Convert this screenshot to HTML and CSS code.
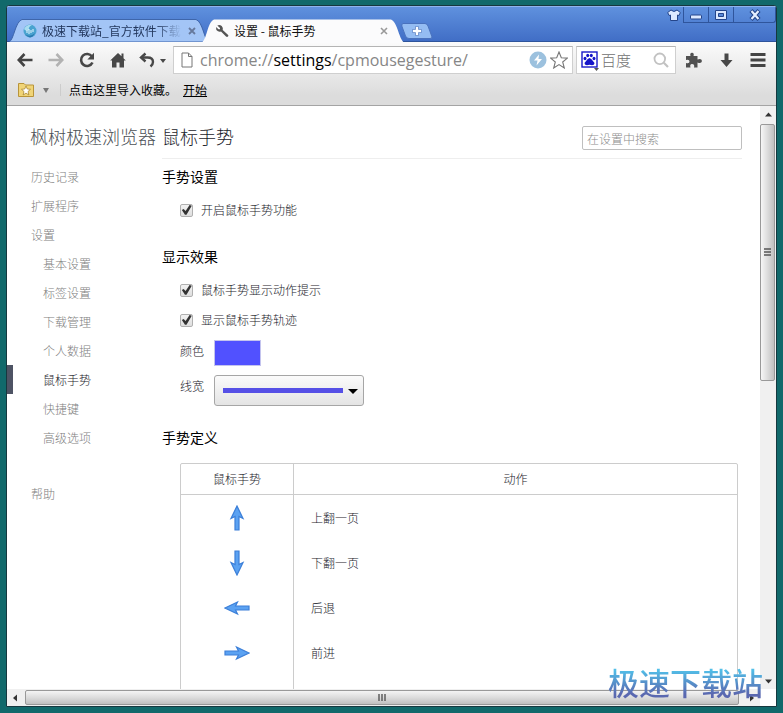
FILE: index.html
```html
<!DOCTYPE html>
<html lang="zh-CN">
<head>
<meta charset="utf-8">
<title>设置 - 鼠标手势</title>
<link rel="stylesheet" href="styles.css">
</head>
<body>
<div class="window">
  <header class="titlebar">
    <div class="tabs">
      <div class="tab tab-back">
        <svg class="tab-shape" viewBox="0 0 200 24" preserveAspectRatio="none" aria-hidden="true"><path d="M0 24C5 22 6 3 13 .5H187C194 3 195 22 200 24Z" fill="#a3c5f6" stroke="#3b62a8"/></svg>
        <svg class="favicon" viewBox="0 0 14 14" aria-hidden="true"><circle cx="7" cy="7" r="6.5" fill="#4aa3d0"/><path d="M1 5Q4 0 9 1Q5 3 6 6Q3 8 1 5Z" fill="#a8dcf0"/><path d="M4 9V6M6 10V5M8 9V6M10 8V5" stroke="#e8f8ff"/><path d="M2 10Q7 14 12 9Q10 13 7 13.5Q4 13 2 10Z" fill="#2a78b0"/></svg>
        <span class="tab-title fade">极速下载站_官方软件下载</span>
        <button class="tab-close" aria-label="关闭标签"><svg viewBox="0 0 8 8"><path d="M1 1L7 7M7 1L1 7" stroke="#66799c" stroke-width="1.8"/></svg></button>
      </div>
      <div class="tab tab-front">
        <svg class="tab-shape" viewBox="0 0 204 24" preserveAspectRatio="none" aria-hidden="true"><path d="M0 24C6 22 6 3 13 .5H190C197 3 198 22 204 24Z" fill="#fbfbfc"/></svg>
        <svg class="favicon" viewBox="0 0 14 14" aria-hidden="true"><path d="M2.3 1.5L5 4V5.2H3.5L1 3Q.6 6 3 7.3Q4.500 8 6 7.400L11 12.600Q12 13.500 13 12.600T12.900 10.800L7.700 6Q8.500 3.800 6.700 2Q4.700.5 2.300 1.500Z" fill="#555"/></svg>
        <span class="tab-title">设置 - 鼠标手势</span>
        <button class="tab-close" aria-label="关闭标签"><svg viewBox="0 0 8 8"><path d="M1 1L7 7M7 1L1 7" stroke="#999" stroke-width="1.600"/></svg></button>
      </div>
      <button class="new-tab" aria-label="新标签页"><svg viewBox="0 0 32 16"><path d="M2 .5H24Q26 .5 27 3L31 14Q31 15.500 29 15.500H8Q5.500 15.500 4.500 13L.8 3Q.5 .8 2 .5Z" fill="#94bcf2" stroke="#4a72bd"/><path d="M16 3.500V12.500M11.500 8H20.500" stroke="#5a7fc0" stroke-width="4"/><path d="M16 4V12M12 8H20" stroke="#fff" stroke-width="2.400"/></svg></button>
    </div>
    <div class="controls">
      <button class="skin" aria-label="皮肤"><svg viewBox="0 0 14 12"><path d="M4 1Q7 4 10 1L13.300 3.500L12 6.500L10.500 6V11.500H3.500V6L2 6.500L.7 3.500Z" fill="#dce9ff" stroke="#24458a"/></svg></button>
      <button class="ctl" aria-label="最小化"><svg viewBox="0 0 14 12"><rect x="1.500" y="6" width="11" height="4" rx="1" fill="#dce9ff" stroke="#24458a"/></svg></button>
      <button class="ctl" aria-label="最大化"><svg viewBox="0 0 14 12"><path d="M1.500 1.500H12.500V10.500H1.500ZM4.500 4.500V7.500H9.500V4.500Z" fill="#dce9ff" fill-rule="evenodd" stroke="#24458a"/></svg></button>
      <button class="ctl ctl-close" aria-label="关闭"><svg viewBox="0 0 14 12"><path d="M3 1.500L11 10.500M11 1.500L3 10.500" stroke="#24458a" stroke-width="4.200"/><path d="M3.500 2L10.500 10M10.500 2L3.500 10" stroke="#e4eeff" stroke-width="2.200"/></svg></button>
    </div>
  </header>

  <div class="chrome">
    <nav class="toolbar">
      <button class="tool" aria-label="后退"><svg viewBox="0 0 16 16"><path d="M15.500 8H2M7.500 2L1.800 8L7.500 14" fill="none" stroke="#444" stroke-width="2.600"/></svg></button>
      <button class="tool" aria-label="前进"><svg viewBox="0 0 16 16"><path d="M.5 8H14M8.500 2L14.200 8L8.500 14" fill="none" stroke="#b2b2b2" stroke-width="2.600"/></svg></button>
      <button class="tool" aria-label="刷新"><svg viewBox="0 0 16 16"><path d="M13 4.500A6 6 0 1 0 13.500 10.500" fill="none" stroke="#484848" stroke-width="2.600"/><path d="M15 .8V7.500H8.300Z" fill="#484848"/></svg></button>
      <button class="tool" aria-label="主页"><svg viewBox="0 0 16 16"><path d="M8 1L11.500 4.300V1.500H13.500V6.200L15.800 8.500H14V15.500H9.500V10.500H6.500V15.500H2V8.500H.2Z" fill="#484848"/></svg></button>
      <button class="tool undo" aria-label="恢复关闭的标签"><svg viewBox="0 0 28 16"><path d="M2 5.500H8.500Q14 5.500 14 10Q14 12.500 11.500 14.500" fill="none" stroke="#484848" stroke-width="2.400"/><path d="M6.500 1.500L2 5.500L6.500 9.500" fill="none" stroke="#484848" stroke-width="2.400"/><path d="M21 7H27L24 11Z" fill="#484848"/></svg></button>
      <div class="address">
        <svg class="doc" viewBox="0 0 12 16" aria-hidden="true"><path d="M1 1H7.500L11 4.500V15H1ZM7.500 1V4.500H11" fill="#fff" stroke="#777"/></svg>
        <span class="url">chrome://<b>settings</b>/cpmousegesture/</span>
        <button class="mini" aria-label="加速"><svg viewBox="0 0 18 18"><circle cx="9" cy="9" r="8.500" fill="#9cc1de"/><path d="M10 3.500L5 9.500H8.500L7.500 14.500L13 8H9.500Z" fill="#fff"/></svg></button>
        <button class="mini" aria-label="收藏"><svg viewBox="0 0 18 18"><path d="M9 1L11.300 6.800L17.400 7.100L12.700 11L14.300 17L9 13.600L3.700 17L5.300 11L.6 7.100L6.700 6.800Z" fill="#fff" stroke="#777" stroke-width="1.100"/></svg></button>
      </div>
      <div class="search">
        <svg class="paw" viewBox="0 0 20 22" aria-hidden="true"><rect x="1" y="3" width="15" height="15" fill="#fff" stroke="#1818c8" stroke-width="1.400"/><g fill="#1414c8" transform="translate(.5 2.500)"><ellipse cx="3.500" cy="7" rx="1.500" ry="1.800"/><ellipse cx="6.200" cy="4" rx="1.500" ry="1.800"/><ellipse cx="9.800" cy="4" rx="1.500" ry="1.800"/><ellipse cx="12.500" cy="7" rx="1.500" ry="1.800"/><path d="M8 6.500Q10 7 11 9Q13.500 11 12.500 13Q11 14.200 8 13.200Q5 14.200 3.500 13Q2.500 11 5 9Q6 7 8 6.500Z"/></g><path d="M13 19H18L15.500 22Z" fill="#555"/></svg>
        <input class="search-input" type="text" placeholder="百度" aria-label="百度">
        <svg class="glass" viewBox="0 0 16 16" aria-hidden="true"><circle cx="6.800" cy="6.800" r="5.300" fill="none" stroke="#c2c2c2" stroke-width="1.800"/><path d="M10.800 10.800L15 15" stroke="#c2c2c2" stroke-width="2.200"/></svg>
      </div>
      <div class="actions">
        <button class="tool" aria-label="扩展"><svg viewBox="0 0 16 16"><path d="M0 4H4.500Q3.500 1 6 .8Q8.500 1 7.500 4H11.500V7.500Q15.500 6 16 9Q15.500 12 11.500 10.500V15.500H8Q9 12 6 12Q3.500 12 4.500 15.500H0V11Q3.500 12 3.500 9.500Q3.500 7 0 8Z" fill="#505050"/></svg></button>
        <button class="tool" aria-label="下载"><svg viewBox="0 0 16 16"><path d="M6.500 1.500H10.500V8H14.500L8.500 15L2.500 8H6.500Z" fill="#484848"/></svg></button>
        <button class="tool" aria-label="菜单"><svg viewBox="0 0 16 16"><path d="M.5 2.500H15.500M.5 8H15.500M.5 13.500H15.500" stroke="#444" stroke-width="2.800"/></svg></button>
      </div>
    </nav>
    <nav class="bookmarks">
      <button class="folder" aria-label="收藏夹"><svg viewBox="0 0 32 14"><path d="M.5 .5H6L7.500 2H15.500V13.500H.5Z" fill="#f0d477" stroke="#b8943a"/><path d="M8 3L9.300 6L12.500 6.300L10 8.500L10.900 12L8 10.100L5.100 12L6 8.500L3.500 6.300L6.700 6Z" fill="#fff" stroke="#a07d28" stroke-width=".7"/><path d="M25 5H31L28 10Z" fill="#777"/></svg></button>
      <span class="hint">点击这里导入收藏。</span>
      <a class="start" href="#">开始</a>
    </nav>
  </div>

  <div class="viewport">
    <div class="page">
      <aside class="sidebar">
        <h1>枫树极速浏览器</h1>
        <ul class="menu">
          <li><a href="#">历史记录</a></li>
          <li><a href="#">扩展程序</a></li>
          <li><a href="#">设置</a>
            <ul>
              <li><a href="#">基本设置</a></li>
              <li><a href="#">标签设置</a></li>
              <li><a href="#">下载管理</a></li>
              <li><a href="#">个人数据</a></li>
              <li class="current"><a href="#">鼠标手势</a></li>
              <li><a href="#">快捷键</a></li>
              <li><a href="#">高级选项</a></li>
            </ul>
          </li>
          <li class="help"><a href="#">帮助</a></li>
        </ul>
      </aside>
      <main class="content">
        <div class="page-head">
          <h2>鼠标手势</h2>
          <input class="find" type="search" placeholder="在设置中搜索" aria-label="在设置中搜索">
        </div>
        <section>
          <h3>手势设置</h3>
          <label class="check"><input type="checkbox" checked>开启鼠标手势功能</label>
        </section>
        <section>
          <h3>显示效果</h3>
          <label class="check"><input type="checkbox" checked>鼠标手势显示动作提示</label>
          <label class="check"><input type="checkbox" checked>显示鼠标手势轨迹</label>
          <div class="field"><label for="color">颜色</label><input id="color" class="swatch" type="color" value="#5151ff"></div>
          <div class="field"><label for="width">线宽</label><span class="picker"><select id="width"><option value="5"></option></select></span></div>
        </section>
        <section>
          <h3>手势定义</h3>
          <table>
            <thead><tr><th class="gesture">鼠标手势</th><th>动作</th></tr></thead>
            <tbody>
              <tr><td class="gesture"><svg class="arrow" viewBox="0 0 26 26"><path d="M13 1L19 13.500L15 11.500V25H11V11.500L7 13.500Z"/></svg></td><td>上翻一页</td></tr>
              <tr><td class="gesture"><svg class="arrow" viewBox="0 0 26 26"><path d="M13 25L19 12.500L15 14.500V1H11V14.500L7 12.500Z"/></svg></td><td>下翻一页</td></tr>
              <tr><td class="gesture"><svg class="arrow" viewBox="0 0 26 26"><path d="M1 13L13.500 7L11.500 11H25V15H11.500L13.500 19Z"/></svg></td><td>后退</td></tr>
              <tr><td class="gesture"><svg class="arrow" viewBox="0 0 26 26"><path d="M25 13L12.500 7L14.500 11H1V15H14.500L12.500 19Z"/></svg></td><td>前进</td></tr>
              <tr><td class="gesture"></td><td></td></tr>
            </tbody>
          </table>
        </section>
      </main>
    </div>
    <div class="vbar" aria-hidden="true">
      <svg class="cap" viewBox="0 0 16 16"><path d="M5 10.500H12L8.500 6.500Z" fill="#333"/></svg>
      <div class="vthumb"><svg class="grip" viewBox="0 0 8 8"><path d="M0 1H7M0 4H7M0 7H7" stroke="#555" stroke-width="1.400"/></svg></div>
      <svg class="cap end" viewBox="0 0 16 16"><path d="M5 6.500H12L8.500 10.500Z" fill="#333"/></svg>
    </div>
  </div>
  <div class="hbar" aria-hidden="true">
    <svg class="cap" viewBox="0 0 16 16"><path d="M10 4.500V11.500L6 8Z" fill="#333"/></svg>
    <div class="hthumb"><svg class="grip" viewBox="0 0 8 8"><path d="M1 0V7M4 0V7M7 0V7" stroke="#555" stroke-width="1.400"/></svg></div>
    <svg class="cap" viewBox="0 0 16 16"><path d="M6 4.500V11.500L10 8Z" fill="#333"/></svg>
    <div class="corner"></div>
  </div>
</div>
<div class="watermark">极速下载站</div>
</body>
</html>
```
FILE: styles.css
```css
* { box-sizing: border-box; }

body {
  margin: 0;
  height: 100vh;
  padding: 5px 6px 6px;
  background: #11696b;
  color: #1c242c;
  font: 12px/20px "Noto Sans CJK SC", sans-serif;
  font-weight: 300;
  overflow: hidden;
  position: relative;
}

button {
  border: 0;
  padding: 0;
  background: none;
  display: flex;
  align-items: center;
  justify-content: center;
}

svg { display: block; flex: none; }
h1, h2, h3, ul { margin: 0; padding: 0; font-weight: 300; }
ul { list-style: none; }
a { color: inherit; text-decoration: none; }

.window {
  height: 100%;
  display: flex;
  flex-direction: column;
  border: 1px solid #16383f;
  border-radius: 3px 3px 0 0;
  background: #fff;
  overflow: hidden;
}

/* Title bar and tabs */
.titlebar {
  height: 36px;
  display: flex;
  justify-content: space-between;
  align-items: flex-start;
  background: linear-gradient(#5f91de, #416ec6);
  border-top: 1px solid #8fb4ee;
  border-bottom: 1px solid #2f559c;
}
.tabs {
  display: flex;
  align-items: flex-start;
  padding: 12px 0 0 2px;
}
.tab {
  position: relative;
  height: 23px;
  display: flex;
  align-items: center;
  gap: 5px;
  color: #111;
}
.tab > * { position: relative; }
.tab .tab-shape { position: absolute; inset: 0; width: 100%; height: 100%; }
.tab-back { width: 200px; padding: 0 12px 0 14px; color: #23385e; }
.tab-front { width: 204px; height: 24px; margin-left: -8px; padding: 0 16px 0 14px; z-index: 1; }
.favicon { width: 14px; height: 14px; }
.tab-title { flex: 1; white-space: nowrap; overflow: hidden; font-weight: 400; }
.fade { mask-image: linear-gradient(90deg, #000 80%, transparent); }
.tab-close { width: 10px; height: 10px; }
.tab-close svg { width: 8px; height: 8px; }
.new-tab { margin: 4px 0 0 -4px; }
.new-tab svg { width: 32px; height: 16px; }

.controls { display: flex; }
.skin { width: 18px; height: 16px; }
.controls svg { width: 14px; height: 12px; }
.ctl {
  width: 25px;
  height: 16px;
  border: solid #2f559c;
  border-width: 0 0 1px 1px;
}
.ctl-close { width: 43px; border-right-width: 1px; border-radius: 0 0 3px 0; }

/* Toolbar and bookmarks */
.chrome {
  background: linear-gradient(#fbfbfb, #dcdcdc 85%);
  border-bottom: 1px solid #a4a4a4;
}
.toolbar {
  display: flex;
  align-items: center;
  padding: 4px 10px 0;
  height: 32px;
}
.tool { width: 16px; height: 16px; margin-right: 15px; }
.tool svg { width: 16px; height: 16px; }
.undo, .undo svg { width: 28px; }
.toolbar .undo { margin-right: 6px; margin-left: -2px; }
.address, .search {
  height: 28px;
  display: flex;
  align-items: center;
  background: #fff;
  border: 1px solid #cfcfcf;
  border-top-color: #b4b4b4;
}
.address { flex: 1; padding: 0 4px 0 7px; }
.doc { width: 12px; height: 16px; margin-right: 7px; }
.url {
  flex: 1;
  font: 16px/24px "Open Sans", "Noto Sans", sans-serif;
  color: #868686;
  white-space: nowrap;
}
.url b { font-weight: 400; color: #000; }
.mini { width: 18px; height: 18px; margin-left: 3px; }
.mini svg { width: 18px; height: 18px; }
.search { width: 100px; margin-left: 3px; padding: 0 6px 0 4px; }
.paw { width: 20px; height: 22px; }
.search-input {
  flex: 1;
  min-width: 0;
  border: 0;
  padding: 0;
  background: none;
  font: inherit;
  font-size: 15px;
}
.search-input::placeholder { color: #707070; }
.glass { width: 16px; height: 16px; }
.actions { display: flex; padding-left: 10px; gap: 16px; }
.actions .tool { margin: 0; }

.bookmarks {
  height: 31px;
  display: flex;
  align-items: center;
  padding-left: 11px;
  color: #000;
  font-weight: 400;
}
.folder svg { width: 32px; height: 14px; }
.hint { margin-left: 10px; padding-left: 8px; border-left: 1px solid #ccc; line-height: 12px; }
.start { margin-left: 6px; text-decoration: underline; }

/* Page */
.viewport { flex: 1; min-height: 0; display: flex; }
.page { flex: 1; min-width: 0; display: flex; overflow: hidden; }
.sidebar { width: 155px; flex: none; color: #808080; }
.sidebar h1 {
  padding: 16px 0 0 23px;
  font-size: 18px;
  line-height: 28px;
  color: #4c5156;
  white-space: nowrap;
}
.menu { padding-top: 12px; line-height: 29px; }
.menu a { display: block; padding-left: 24px; }
.menu ul a { padding-left: 36px; }
.current { border-left: 6px solid #4e5364; color: #1c242c; }
.menu .current a { padding-left: 30px; }
.help { padding-top: 27px; }

.content { flex: 1; min-width: 0; padding-right: 18px; }
.page-head {
  display: flex;
  justify-content: space-between;
  align-items: flex-end;
  padding: 16px 0 8px;
  border-bottom: 1px solid #eee;
}
h2 { font-size: 18px; line-height: 28px; }
.find {
  width: 160px;
  height: 24px;
  border: 1px solid #bfbfbf;
  border-radius: 2px;
  padding: 0 4px;
  font: inherit;
}
.find::placeholder { color: #8c8c8c; }

section { padding-top: 7px; margin-bottom: 14px; }
h3 { font-size: 14px; line-height: 20px; font-weight: 400; color: #000; margin-bottom: 9px; }
.check {
  display: flex;
  align-items: center;
  gap: 8px;
  height: 30px;
  padding-left: 18px;
}
.check input {
  appearance: none;
  width: 13px;
  height: 13px;
  margin: 0;
  border: 1px solid #b0b0b0;
  border-radius: 2px;
  background: linear-gradient(#f2f2f2, #dedede);
}
.check input:checked::before {
  content: "";
  display: block;
  height: 11px;
  background: #333;
  clip-path: polygon(8% 50%, 24% 40%, 42% 60%, 78% 4%, 98% 12%, 50% 94%, 36% 94%);
}
.field {
  display: flex;
  align-items: flex-start;
  gap: 10px;
  min-height: 35px;
  padding: 5px 0 0 18px;
}
.field label { line-height: 22px; }
.swatch {
  appearance: none;
  width: 47px;
  height: 26px;
  padding: 0;
  border: 1px solid #c4c4ee;
  background: none;
}
.swatch::-webkit-color-swatch-wrapper { padding: 0; }
.swatch::-webkit-color-swatch { border: 0; border-radius: 0; }
.picker { position: relative; width: 150px; height: 31px; }
.picker select {
  appearance: none;
  width: 100%;
  height: 100%;
  border: 1px solid #a6a6a6;
  border-radius: 3px;
  background: linear-gradient(#fbfbfb, #e4e4e4);
}
.picker::before, .picker::after { content: ""; position: absolute; pointer-events: none; }
.picker::before { left: 9px; right: 21px; top: 13px; height: 5px; background: #5650e6; }
.picker::after {
  right: 6px;
  top: 14px;
  border: solid transparent;
  border-width: 5px 5px 0;
  border-top-color: #000;
}

table {
  width: calc(100% - 22px);
  margin: 16px 0 0 18px;
  border: 1px solid #ccc;
  border-radius: 2px;
  border-spacing: 0;
}
th { height: 31px; padding: 0; font-weight: 300; border-bottom: 1px solid #ccc; }
td { height: 45px; padding: 0 17px; }
.gesture { width: 113px; border-right: 1px solid #ccc; }
.arrow { width: 26px; height: 26px; margin: 0 auto; fill: #5ba2f2; stroke: #3c7fd8; stroke-width: 1.2; }

/* Scroll bars */
.cap { width: 16px; height: 16px; }
.grip { width: 8px; height: 8px; }
.vbar { width: 16px; display: flex; flex-direction: column; background: #f0f0f0; }
.vthumb, .hthumb {
  display: flex;
  align-items: center;
  justify-content: center;
  border: 1px solid #999;
  border-radius: 2px;
}
.vthumb { height: 44%; margin: 2px 1px 0 0; background: linear-gradient(90deg, #f6f6f6, #dcdcdc 50%, #c0c0c0); }
.end { margin-top: auto; }
.hbar { height: 17px; display: flex; align-items: center; background: #f0f0f0; }
.hthumb { flex: 1; height: 15px; margin: 0 5px 0 2px; background: linear-gradient(#f4f4f4, #dcdcdc 50%, #c0c0c0); }
.corner { width: 16px; height: 17px; background: #fff; }

.watermark {
  position: absolute;
  right: 20px;
  bottom: 11px;
  font-size: 31px;
  line-height: 40px;
  font-weight: 500;
  color: transparent;
  background: linear-gradient(#52bfe8 20%, #5a68b0 80%);
  background-clip: text;
}
```
